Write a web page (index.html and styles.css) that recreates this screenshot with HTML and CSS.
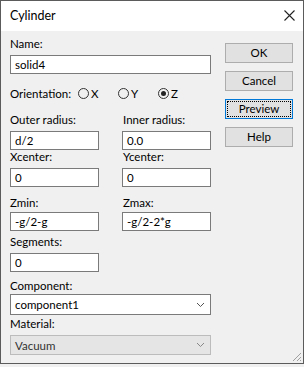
FILE: index.html
```html
<!DOCTYPE html>
<html lang="en">
  <head>
    <meta charset="UTF-8" />
    <title>Cylinder</title>
    <link rel="stylesheet" href="styles.css">
  </head>
  <body>
    <section class="window">
      <div class="titlebar">
        <span class="title">Cylinder</span>
        <svg class="close" width="11" height="11" viewBox="0 0 11 11">
          <path d="M0.5 0.5 L10.5 10.5 M10.5 0.5 L0.5 10.5" stroke="#222" stroke-width="1.1" fill="none" />
        </svg>
      </div>
      <div class="content">
        <div class="form">
          <div class="label">Name:</div>
          <div class="input wide">solid4</div>

          <div class="orient">
            <span class="orient-label">Orientation:</span>
            <span class="radio"><i class="dot"></i>X</span>
            <span class="radio"><i class="dot"></i>Y</span>
            <span class="radio"><i class="dot on"></i>Z</span>
          </div>

          <div class="pair row-radius">
            <div class="field">
              <div class="label">Outer radius:</div>
              <div class="input">d/2</div>
            </div>
            <div class="field">
              <div class="label">Inner radius:</div>
              <div class="input">0.0</div>
            </div>
          </div>

          <div class="pair row-center">
            <div class="field">
              <div class="label">Xcenter:</div>
              <div class="input">0</div>
            </div>
            <div class="field">
              <div class="label">Ycenter:</div>
              <div class="input">0</div>
            </div>
          </div>

          <div class="pair row-z">
            <div class="field">
              <div class="label">Zmin:</div>
              <div class="input tight">-g/2-g</div>
            </div>
            <div class="field">
              <div class="label">Zmax:</div>
              <div class="input tight">-g/2-2*g</div>
            </div>
          </div>

          <div class="field row-seg">
            <div class="label">Segments:</div>
            <div class="input">0</div>
          </div>

          <div class="label row-comp">Component:</div>
          <div class="combo first">
            <span>component1</span>
            <svg width="9" height="6" viewBox="0 0 9 6"><path d="M1 1 L4.5 4.5 L8 1" stroke="#555" fill="none" /></svg>
          </div>

          <div class="label row-mat">Material:</div>
          <div class="combo disabled">
            <span>Vacuum</span>
            <svg width="9" height="6" viewBox="0 0 9 6"><path d="M1 1 L4.5 4.5 L8 1" stroke="#888" fill="none" /></svg>
          </div>
        </div>

        <div class="buttons">
          <div class="btn">OK</div>
          <div class="btn">Cancel</div>
          <div class="btn focus"><span>Preview</span></div>
          <div class="btn">Help</div>
        </div>
      </div>
      <svg class="grip" width="11" height="11" viewBox="0 0 11 11">
        <path d="M10 2 L2 10 M10 6 L6 10 M10 9 L9 10" stroke="#a0a0a0" fill="none" />
      </svg>
    </section>
  </body>
</html>
```

FILE: styles.css
```css
* {
  margin: 0;
  padding: 0;
  box-sizing: border-box;
}
body {
  background: #f0f0f0;
  font-family: Lato, "Noto Sans", sans-serif;
  font-size: 11.5px;
  color: #000;
}
.window {
  width: 304px;
  height: 364px;
  border: 1px solid #5b5b5b;
  background: #f0f0f0;
  position: relative;
}
.titlebar {
  height: 30px;
  background: #fff;
  display: flex;
  align-items: center;
  justify-content: space-between;
  padding: 0 8px 1px 9px;
}
.title {
  font-size: 12.5px;
}
.content {
  display: flex;
  padding: 0 0 0 9px;
}
.form {
  width: 201px;
}
.label {
  line-height: 14px;
  height: 14px;
}
.form > .label:first-child {
  margin-top: 6px;
}
.input {
  height: 19px;
  margin-top: 4px;
  border: 1px solid #7a7a7a;
  background: #fff;
  line-height: 17px;
  padding-left: 4px;
  width: 89px;
}
.input.tight {
  margin-top: 2px;
}
.input.wide {
  width: 201px;
}
.orient {
  display: flex;
  align-items: center;
  height: 18px;
  margin-top: 10px;
}
.orient-label {
  width: 68px;
}
.radio {
  display: flex;
  align-items: center;
  width: 40px;
}
.dot {
  width: 11px;
  height: 11px;
  border: 1px solid #333;
  border-radius: 50%;
  margin-right: 2px;
  display: flex;
  align-items: center;
  justify-content: center;
}
.dot.on::after {
  content: "";
  width: 5px;
  height: 5px;
  border-radius: 50%;
  background: #222;
}
.pair {
  display: flex;
  justify-content: space-between;
}
.pair .field + .field .label {
  padding-left: 1px;
}
.row-radius {
  margin-top: 11px;
}
.row-center {
  margin-top: 0;
}
.row-z {
  margin-top: 9px;
}
.row-seg {
  margin-top: 4px;
}
.row-comp {
  margin-top: 7px;
}
.row-mat {
  margin-top: 2px;
}
.combo {
  height: 20px;
  margin-top: 4px;
  width: 201px;
  border: 1px solid #7a7a7a;
  background: #fff;
  display: flex;
  align-items: center;
  justify-content: space-between;
  padding: 0 5px 0 4px;
}
.combo.first {
  height: 21px;
  margin-top: 1px;
}
.combo.disabled {
  background: #e5e5e5;
  border-color: #bcbcbc;
  color: #333;
}
.buttons {
  display: flex;
  flex-direction: column;
  gap: 8px;
  margin: 12px 0 0 14px;
}
.btn {
  width: 68px;
  height: 20px;
  border: 1px solid #adadad;
  background: #e1e1e1;
  text-align: center;
  line-height: 18px;
}
.btn.focus {
  border-color: #0078d7;
  padding: 1px;
  line-height: 14px;
}
.btn.focus span {
  display: block;
  border: 1px dotted #000;
  height: 16px;
}
.grip {
  position: absolute;
  right: 1px;
  bottom: 1px;
}
```
